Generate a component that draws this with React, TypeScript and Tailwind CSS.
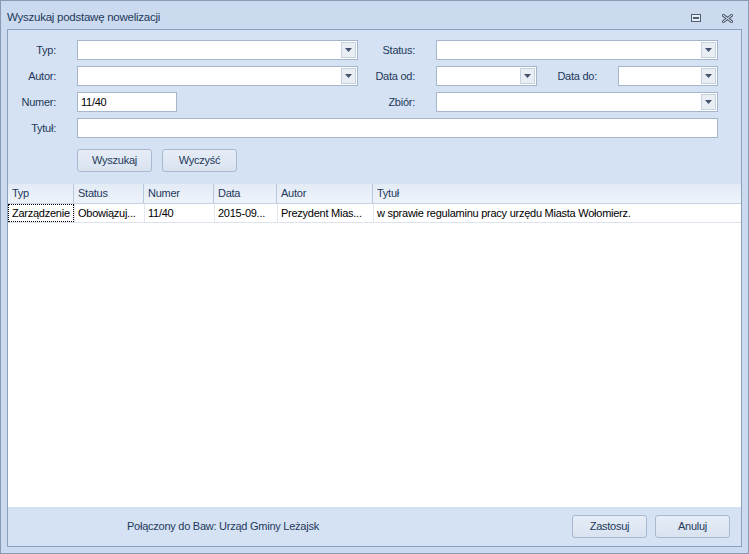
import React from "react";

const Arrow = () => (
  <svg width="7" height="4" viewBox="0 0 7 4">
    <path d="M0 0h7L3.5 4z" fill="#44546a" />
  </svg>
);

const Combo = ({ w }: { w: string }) => (
  <div className={`${w} h-[20px] border border-[#a5b6cc] bg-white flex justify-end p-[1px]`}>
    <div className="w-[15px] h-full border border-[#c6d1df] bg-[#e9eef5] flex items-center justify-center">
      <Arrow />
    </div>
  </div>
);

const TextBox = ({ w, value }: { w: string; value?: string }) => (
  <div className={`${w} h-[20px] border border-[#a5b6cc] bg-white flex items-center pl-[3px] text-black`}>
    {value}
  </div>
);

const Btn = ({ label }: { label: string }) => (
  <div className="w-[75px] h-[23px] rounded-[3px] border border-[#a8b9cf] bg-gradient-to-b from-[#e6edf7] to-[#d9e3f0] flex items-center justify-center text-[#1e395b]">
    {label}
  </div>
);

const cols = [
  { name: "Typ", w: "w-[66px]" },
  { name: "Status", w: "w-[70px]" },
  { name: "Numer", w: "w-[70px]" },
  { name: "Data", w: "w-[63px]" },
  { name: "Autor", w: "w-[96px]" },
  { name: "Tytuł", w: "flex-1" },
];

const row = ["Zarządzenie", "Obowiązuj...", "11/40", "2015-09...", "Prezydent Mias...", "w sprawie regulaminu pracy urzędu Miasta Wołomierz."];

export default function App() {
  return (
    <div className="w-[749px] h-[554px] bg-[#cbdaee] border border-[#8799b3] flex flex-col text-[11px] tracking-[-0.25px] text-[#1e395b] font-['Liberation_Sans',Arial,sans-serif] leading-none">
      <div className="h-[28px] shrink-0 flex items-center pl-[6px] pr-[15px] pt-[6px]">
        <span className="text-[11.5px]">Wyszukaj podstawę nowelizacji</span>
        <div className="ml-auto flex items-center gap-[21px]">
          <svg width="10" height="8" viewBox="0 0 10 8">
            <rect x="0.5" y="0.5" width="9" height="7" fill="#e8eef6" stroke="#4e5e75" />
            <rect x="2.5" y="3.5" width="5" height="1" fill="none" stroke="#4e5e75" />
          </svg>
          <svg width="11" height="9" viewBox="0 0 11 9">
            <path d="M1.5 1.5L9.5 7.5M9.5 1.5L1.5 7.5" stroke="#4e5e75" strokeWidth="3" strokeLinecap="square" />
            <path d="M1.5 1.5L9.5 7.5M9.5 1.5L1.5 7.5" stroke="#eef2f8" strokeWidth="1" strokeLinecap="square" />
          </svg>
        </div>
      </div>
      <div className="flex-1 mx-[6px] mb-[6px] border border-[#8ba0bd] bg-[#d5e2f3] flex flex-col min-h-0">
        <div className="pt-[10px] flex flex-col gap-[6px]">
          <div className="flex items-center">
            <div className="w-[48px] text-right">Typ:</div>
            <div className="ml-[21px]"><Combo w="w-[281px]" /></div>
            <div className="w-[57px] text-right">Status:</div>
            <div className="ml-[21px]"><Combo w="w-[282px]" /></div>
          </div>
          <div className="flex items-center">
            <div className="w-[48px] text-right">Autor:</div>
            <div className="ml-[21px]"><Combo w="w-[281px]" /></div>
            <div className="w-[57px] text-right">Data od:</div>
            <div className="ml-[21px]"><Combo w="w-[101px]" /></div>
            <div className="w-[60px] text-right">Data do:</div>
            <div className="ml-[21px]"><Combo w="w-[100px]" /></div>
          </div>
          <div className="flex items-center">
            <div className="w-[48px] text-right">Numer:</div>
            <div className="ml-[21px]"><TextBox w="w-[100px]" value="11/40" /></div>
            <div className="w-[238px] text-right">Zbiór:</div>
            <div className="ml-[21px]"><Combo w="w-[282px]" /></div>
          </div>
          <div className="flex items-center">
            <div className="w-[48px] text-right">Tytuł:</div>
            <div className="ml-[21px]"><TextBox w="w-[641px]" /></div>
          </div>
          <div className="flex gap-[10px] ml-[69px] mt-[5px]">
            <Btn label="Wyszukaj" />
            <Btn label="Wyczyść" />
          </div>
        </div>
        <div className="mt-[12px] flex-1 bg-white flex flex-col min-h-0">
          <div className="h-[20px] flex bg-gradient-to-b from-[#e3ebf6] to-[#eef3fa] border-b border-[#c4d2e4]">
            {cols.map((c, i) => (
              <div
                key={c.name}
                className={`${c.w} h-full flex items-center pl-[4px] ${i < cols.length - 1 ? "border-r border-[#b8c8dd]" : ""}`}
              >
                {c.name}
              </div>
            ))}
          </div>
          <div className="h-[19px] flex border-b border-[#dde3ec] text-black">
            {cols.map((c, i) => (
              <div
                key={c.name}
                className={`${c.w} h-full flex items-center pl-[3px] whitespace-nowrap overflow-hidden ${i === 0 ? "border border-dotted border-black" : "border-l border-l-[#e4e8ee] first:border-l-0"}`}
              >
                {row[i]}
              </div>
            ))}
          </div>
        </div>
        <div className="h-[39px] shrink-0 flex items-start pt-[8px] pr-[11px]">
          <div className="ml-[119px] h-[23px] flex items-center">Połączony do Baw: Urząd Gminy Leżajsk</div>
          <div className="ml-auto flex gap-[8px]">
            <Btn label="Zastosuj" />
            <Btn label="Anuluj" />
          </div>
        </div>
      </div>
    </div>
  );
}
